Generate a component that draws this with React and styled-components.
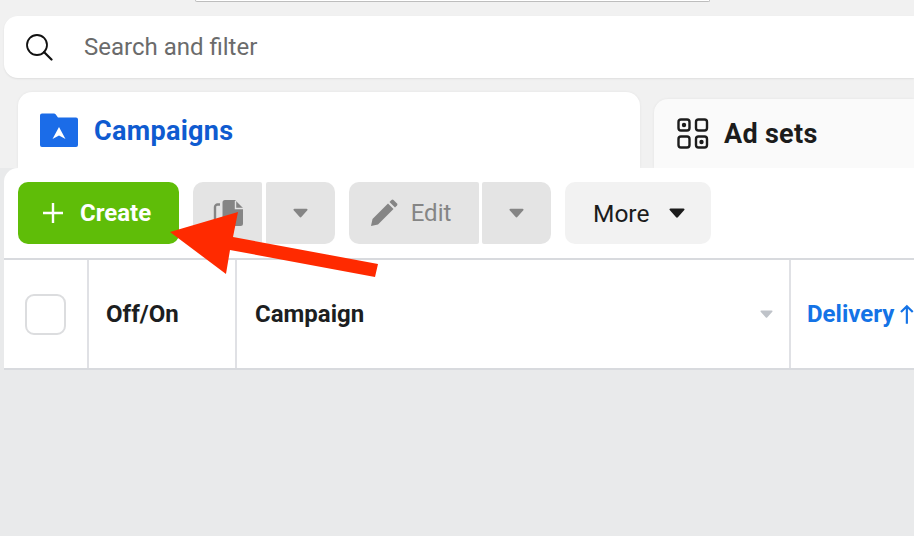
import styled, { createGlobalStyle } from 'styled-components';

const GlobalStyle = createGlobalStyle`
  html, body {
    margin: 0;
    padding: 0;
    background: #e9eaeb;
    overflow: hidden;
  }
  * { box-sizing: border-box; }
`;

const Page = styled.div`
  position: relative;
  width: 914px;
  height: 536px;
  overflow: hidden;
  background: #e9eaeb;
  font-family: Roboto, "Liberation Sans", sans-serif;
`;

const TopArea = styled.div`
  background: #f1f1f1;
  height: 168px;
  padding-left: 4px;
`;

const TopSliver = styled.div`
  margin-left: 191px;
  width: 515px;
  height: 2px;
  background: #fff;
  border: 1px solid #bdbdbd;
  border-top: none;
  border-radius: 0 0 6px 6px;
`;

const SearchBar = styled.div`
  margin-top: 14px;
  height: 62px;
  background: #fff;
  border-radius: 14px 0 0 14px;
  box-shadow: 0 1px 2px rgba(0, 0, 0, 0.08);
  display: flex;
  align-items: center;
  padding-left: 21px;
  gap: 31px;
  font-size: 24px;
  color: #6b6b6b;
`;

const Tabs = styled.div`
  display: flex;
  align-items: flex-end;
  margin-top: 14px;
  margin-left: 14px;
  gap: 14px;
  height: 76px;
`;

const Tab = styled.div`
  display: flex;
  align-items: center;
  background: ${(p) => (p.$active ? '#fff' : '#fafafa')};
  border-radius: ${(p) => (p.$active ? '14px 14px 0 0' : '14px 0 0 0')};
  height: ${(p) => (p.$active ? '76px' : '69px')};
  width: ${(p) => (p.$active ? '622px' : '260px')};
  flex-shrink: 0;
  padding-left: ${(p) => (p.$active ? '22px' : '23px')};
  gap: ${(p) => (p.$active ? '16px' : '15px')};
  font-size: 27px;
  font-weight: 700;
  letter-spacing: 0.3px;
  color: ${(p) => (p.$active ? '#0f5bd0' : '#1c1c1c')};
  box-shadow: 0 0 3px rgba(0, 0, 0, 0.06);
`;

const TabLabel = styled.span`
  position: relative;
  top: ${(p) => (p.$active ? '1px' : '0')};
`;

const Panel = styled.div`
  margin-left: 4px;
  background: #fff;
  border-radius: 14px 0 0 0;
  height: 202px;
  position: relative;
`;

const Toolbar = styled.div`
  display: flex;
  align-items: center;
  height: 90px;
  padding: 14px 0 14px 14px;
`;

const CreateButton = styled.div`
  display: flex;
  align-items: center;
  width: 161px;
  height: 62px;
  padding-left: 25px;
  gap: 17px;
  background: #5fbd08;
  border-radius: 10px;
  color: #fff;
  font-size: 24px;
  font-weight: 700;
  margin-right: 14px;
`;

const Group = styled.div`
  display: flex;
  gap: ${(p) => p.$gap}px;
  margin-right: 14px;
`;

const Segment = styled.div`
  display: flex;
  align-items: center;
  justify-content: center;
  height: 62px;
  width: ${(p) => p.$w}px;
  padding-right: ${(p) => p.$padRight || 0}px;
  background: #e4e4e4;
  border-radius: ${(p) => (p.$side === 'left' ? '10px 2px 2px 10px' : '2px 10px 10px 2px')};
  color: #858585;
  font-size: 24px;
  gap: 13px;
`;

const MoreButton = styled.div`
  display: flex;
  align-items: center;
  width: 146px;
  height: 62px;
  padding-left: 28px;
  gap: 20px;
  background: #f2f2f2;
  border-radius: 10px;
  font-size: 24.5px;
  color: #1c1c1c;
`;

const HeaderRow = styled.div`
  display: flex;
  height: 112px;
  border-top: 2px solid #d8dade;
  border-bottom: 2px solid #d8dade;
`;

const Cell = styled.div`
  display: flex;
  align-items: center;
  width: ${(p) => p.$w}px;
  padding-left: ${(p) => p.$pad}px;
  padding-right: ${(p) => p.$padRight || 0}px;
  border-right: ${(p) => (p.$last ? 'none' : '2px solid #e0e1e5')};
  flex-shrink: 0;
  font-size: 24px;
  font-weight: 700;
  color: ${(p) => p.$color || '#1c1e21'};
  justify-content: ${(p) => p.$justify || 'flex-start'};
  white-space: nowrap;
`;

const Checkbox = styled.div`
  width: 41px;
  height: 41px;
  border: 2px solid #dcdddf;
  border-radius: 9px;
  background: #fff;
`;

const ArrowLayer = styled.svg`
  position: absolute;
  left: 0;
  top: 0;
  pointer-events: none;
`;

const Caret = ({ color, w = 16, h = 10 }) => (
  <svg width={w} height={h} viewBox="0 0 16 10">
    <path d="M1.5 0.5h13a1 1 0 0 1 .8 1.6l-6.2 7a1.4 1.4 0 0 1-2.2 0l-6.2-7a1 1 0 0 1 .8-1.6z" fill={color} />
  </svg>
);

const SearchIcon = () => (
  <svg width="28" height="28" viewBox="0 0 28 28" fill="none" stroke="#111" strokeWidth="1.8">
    <circle cx="12" cy="12" r="10" />
    <path d="M19 19l7.5 7.5" strokeLinecap="round" strokeWidth="2.2" />
  </svg>
);

const CampaignIcon = () => (
  <svg width="38" height="34" viewBox="0 0 38 34">
    <path d="M0 2.5A2 2 0 0 1 2 .5h12a2 2 0 0 1 1.6.8L18 4.5h18a2 2 0 0 1 2 2V32a2 2 0 0 1-2 2H2a2 2 0 0 1-2-2z" fill="#1b6ce8" />
    <path d="M19 14l6.5 12-6.5-3.5L12.5 26z" fill="#fff" />
  </svg>
);

const AdSetsIcon = () => (
  <svg width="32" height="31" viewBox="0 0 32 31" fill="none" stroke="#1c1c1c" strokeWidth="2.4">
    <rect x="1.5" y="1.5" width="11" height="11" rx="2.5" />
    <rect x="19" y="1.5" width="11" height="11" rx="2.5" />
    <rect x="1.5" y="18.5" width="11" height="11" rx="2.5" />
    <rect x="19" y="18.5" width="11" height="11" rx="2.5" />
    <circle cx="7" cy="7" r="2.2" fill="#1c1c1c" stroke="none" />
    <circle cx="24.5" cy="24" r="2.2" fill="#1c1c1c" stroke="none" />
  </svg>
);

const PlusIcon = () => (
  <svg width="20" height="20" viewBox="0 0 20 20" stroke="#fff" strokeWidth="2.4">
    <path d="M10 0v20M0 10h20" />
  </svg>
);

const CopyIcon = () => (
  <svg width="30" height="26" viewBox="0 0 30 26">
    <path d="M7 4.5H4.5a2.5 2.5 0 0 0-2.5 2.5v13" fill="none" stroke="#858585" strokeWidth="2.4" />
    <path d="M12 0h10l8 8v15.5a2.5 2.5 0 0 1-2.5 2.5H12a2.5 2.5 0 0 1-2.5-2.5v-21A2.5 2.5 0 0 1 12 0z" fill="#858585" />
    <path d="M22.5 1v7.5H30" fill="none" stroke="#e4e4e4" strokeWidth="1.4" />
  </svg>
);

const PencilIcon = () => (
  <svg width="28" height="28" viewBox="0 0 28 28" fill="#858585">
    <path d="M1 27l1.5-7L18 4.5l5.5 5.5L8 25.5z" />
    <path d="M19.5 3l2-2a1.5 1.5 0 0 1 2 0l3.5 3.5a1.5 1.5 0 0 1 0 2l-2 2z" />
  </svg>
);

const SortArrow = () => (
  <svg width="14" height="20" viewBox="0 0 14 20" fill="none" stroke="#1473e6" strokeWidth="2.2">
    <path d="M7 20V2M1 8l6-6 6 6" />
  </svg>
);

const App = () => (
  <Page>
    <GlobalStyle />
    <TopArea>
      <TopSliver />
      <SearchBar>
        <SearchIcon />
        Search and filter
      </SearchBar>
      <Tabs>
        <Tab $active>
          <CampaignIcon />
          <TabLabel $active>Campaigns</TabLabel>
        </Tab>
        <Tab>
          <AdSetsIcon />
          <TabLabel>Ad sets</TabLabel>
        </Tab>
      </Tabs>
    </TopArea>
    <Panel>
      <Toolbar>
        <CreateButton>
          <PlusIcon />
          Create
        </CreateButton>
        <Group $gap={4}>
          <Segment $w={69} $side="left"><CopyIcon /></Segment>
          <Segment $w={69} $side="right"><Caret color="#858585" w={15} /></Segment>
        </Group>
        <Group $gap={3}>
          <Segment $w={130} $side="left" $padRight={7}><PencilIcon />Edit</Segment>
          <Segment $w={69} $side="right"><Caret color="#858585" w={15} /></Segment>
        </Group>
        <MoreButton>
          More
          <Caret color="#1c1c1c" />
        </MoreButton>
      </Toolbar>
      <HeaderRow>
        <Cell $w={85} $pad={21}><Checkbox /></Cell>
        <Cell $w={148} $pad={17}>Off/On</Cell>
        <Cell $w={554} $pad={18} $padRight={16} $justify="space-between">
          Campaign
          <Caret color="#bfc3c9" w={13} h={8} />
        </Cell>
        <Cell $w={123} $pad={16} $color="#1473e6" $last>
          Delivery&nbsp;
          <SortArrow />
        </Cell>
      </HeaderRow>
    </Panel>
    <ArrowLayer width="914" height="536" viewBox="0 0 914 536">
      <path d="M170 232L238 212L233 237L378 264L375 277L230 250L226 274z" fill="#ff2a00" />
    </ArrowLayer>
  </Page>
);

export default App;
